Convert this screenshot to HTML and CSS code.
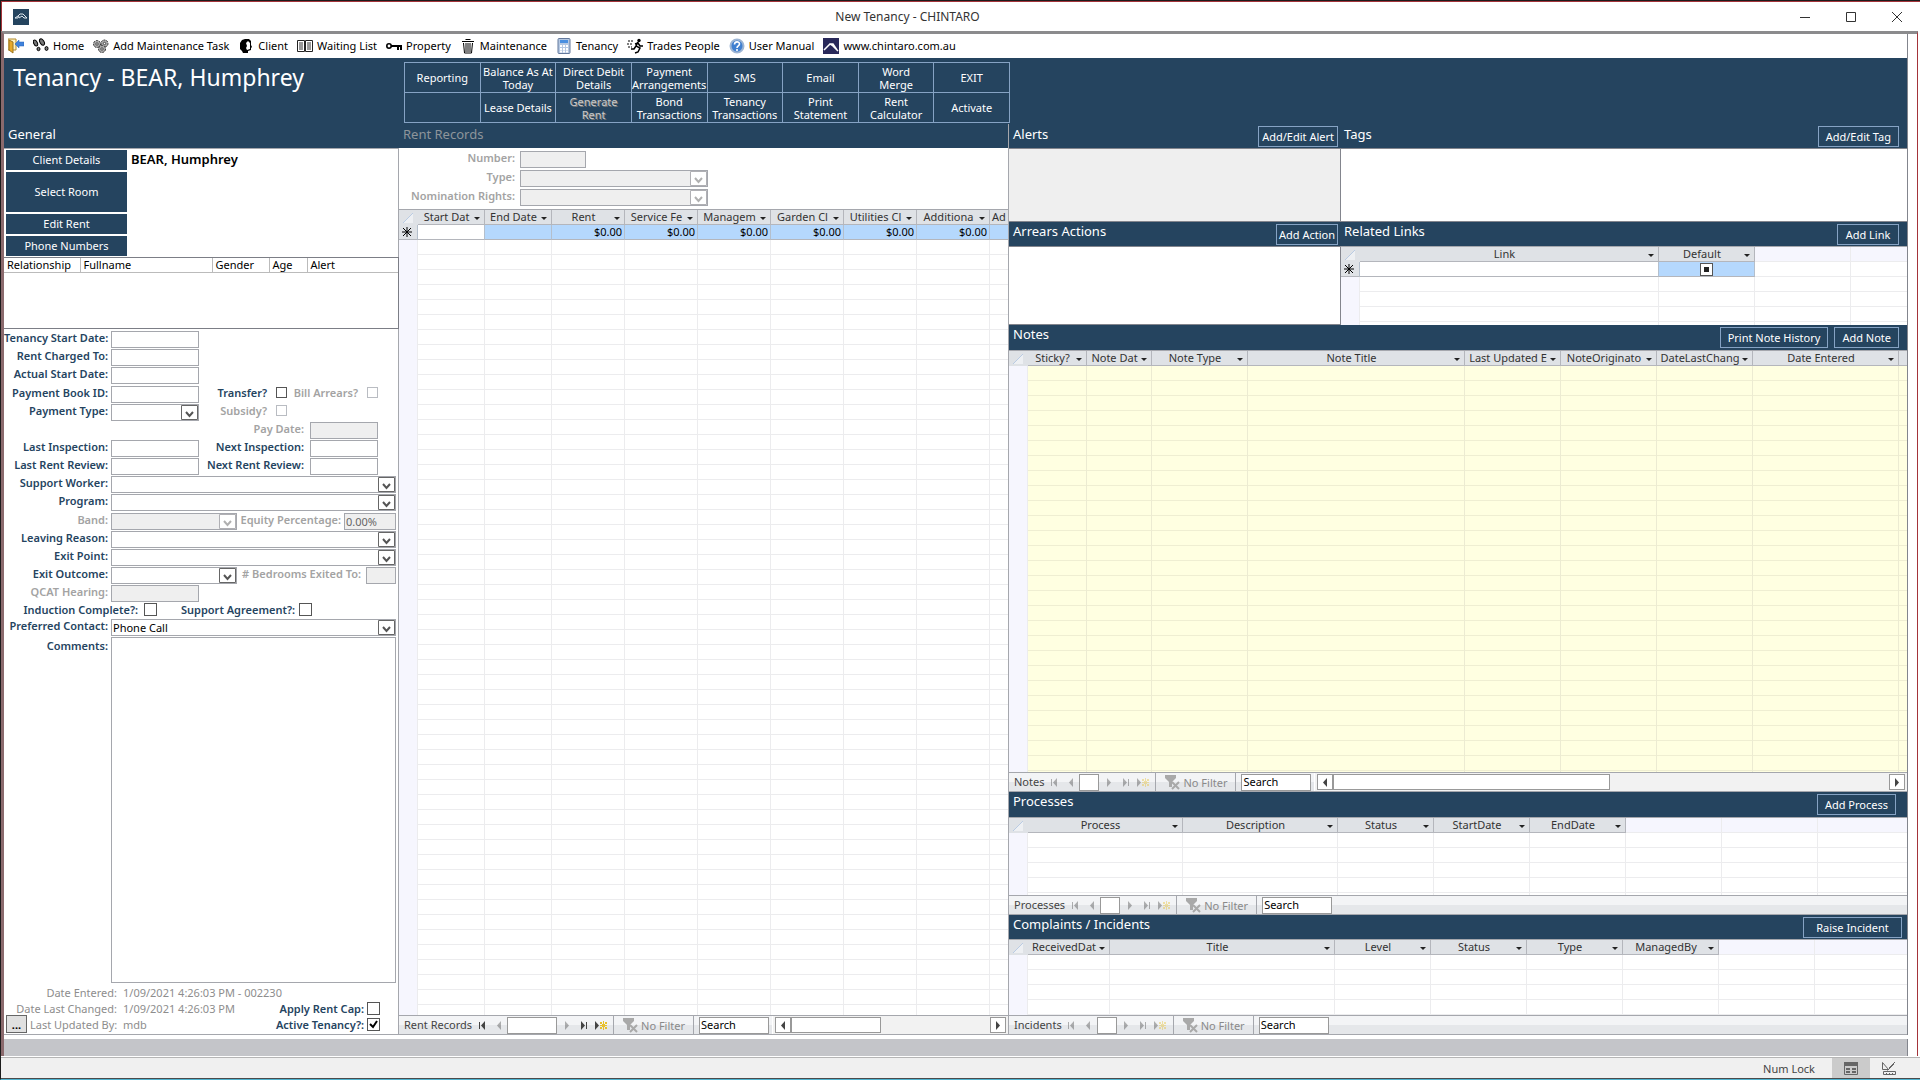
FILE: index.html
```
<!DOCTYPE html>
<html lang="en">
<head>
  <meta charset="UTF-8">
  <meta name="viewport" content="width=device-width, initial-scale=1.0">
  <title>New Tenancy - CHINTARO</title>
  <link rel="stylesheet" href="styles.css">
</head>
<body>
  <!-- shared icons -->
  <svg class="sprite" aria-hidden="true">
    <symbol id="i-first" viewBox="0 0 8 9"><path d="M1 1h1v7H1zM7 0v9L3 4.500z"/></symbol>
    <symbol id="i-prev" viewBox="0 0 8 9"><path d="M6 0v9L2 4.500z"/></symbol>
    <symbol id="i-next" viewBox="0 0 8 9"><path d="M2 0v9l4-4.500z"/></symbol>
    <symbol id="i-last" viewBox="0 0 8 9"><path d="M6 1h1v7H6zM1 0v9l4-4.500z"/></symbol>
    <symbol id="i-new" viewBox="0 0 14 9"><path d="M1 0v9l4-4.500z"/><path d="M6 1h2v2H6zM9 0h1v3H9zM11 1h2v2h-2zM6 4h7v1H6zM6 6h2v2H6zM9 6h1v3H9zM11 6h2v2h-2zM8 3h3v3H8z" fill="#e8c02c"/></symbol>
    <symbol id="i-filter" viewBox="0 0 16 16"><path d="M1 1h11v3L8 8v5H5V8L1 4z" fill="#a9a9a9"/><path d="M8 8l7 7M15 8l-7 7" stroke="#a9a9a9" stroke-width="2"/></symbol>
    <symbol id="i-corner" viewBox="0 0 12 12"><path d="M11 1v10H1z" fill="#eef0f3"/><path d="M11 1L1 11" stroke="#b9cbe3"/></symbol>
    <symbol id="i-star" viewBox="0 0 10 10"><path d="M5 0v10M0 5h10M1 1l8 8M9 1L1 9" stroke="#000"/></symbol>
  </svg>

  <div class="window">
    <header class="title-bar">
      <svg class="app-icon" viewBox="0 0 16 16"><rect width="16" height="16" fill="#25445f"/><path d="M2 9l3-2 2-2h3l2 2 2 2M2 9h3l1-2M6 9l3-2 2 2h3" fill="none" stroke="#dfe8f0"/></svg>
      <span class="caption">New Tenancy - CHINTARO</span>
      <button class="win-button" aria-label="Minimise"><svg viewBox="0 0 10 10"><path d="M0 5.500h10"/></svg></button>
      <button class="win-button" aria-label="Maximise"><svg viewBox="0 0 10 10"><path d="M.5.5h9v9h-9z"/></svg></button>
      <button class="win-button" aria-label="Close"><svg viewBox="0 0 10 10"><path d="M0 0l10 10M10 0L0 10"/></svg></button>
    </header>

    <div class="workspace">
      <nav class="menu">
        <button class="menu-item" aria-label="Exit"><svg viewBox="0 0 16 16"><path d="M0 1h8v11H0z" fill="#fff3c4" stroke="#b08a2c"/><path d="M1 2l4 2v11l-4-3z" fill="#e8a928" stroke="#9a7420"/><path d="M7 6l4-4v2h5v4h-5v2z" fill="#3f82dc" stroke="#2460b4" stroke-width=".5"/></svg></button>
        <button class="menu-item"><svg viewBox="0 0 16 16"><g fill="#777" stroke="#000"><ellipse cx="2.500" cy="5" rx="1.800" ry="3.200" transform="rotate(-25 2.500 5)"/><ellipse cx="5.500" cy="11" rx="1.500" ry="1.700"/><ellipse cx="9" cy="4" rx="2" ry="3.500" transform="rotate(-30 9 4)"/><ellipse cx="13.500" cy="10.500" rx="1.500" ry="2"/></g></svg>Home</button>
        <button class="menu-item"><svg viewBox="0 0 16 16"><g fill="#aaa" stroke="#333" stroke-dasharray="2 1"><circle cx="4" cy="6" r="3.500"/><circle cx="11.500" cy="5.500" r="3.500"/><circle cx="9" cy="11" r="3.500"/></g><g fill="#fff" stroke="#444"><circle cx="4" cy="6" r="1.200"/><circle cx="11.500" cy="5.500" r="1.200"/><circle cx="9" cy="11" r="1.200"/></g></svg>Add Maintenance Task</button>
        <button class="menu-item"><svg viewBox="0 0 16 16"><path d="M2 5l2-3 3-1h4l2 2v4l1 2-1 1v2l-3 1v2H5l-1-2-2-2z"/><path d="M8 5l2-2 2 2v6l-3 1-1-2 1-2z" fill="#fff"/></svg>Client</button>
        <button class="menu-item"><svg viewBox="0 0 16 16"><path d="M.5 2.500h7v11h-7zM8.500 2.500h7v11h-7z" fill="#fff" stroke="#222"/><path d="M2 5h4M2 7h4M2 9h4M2 11h4M10 5h4M10 7h4M10 9h4M10 11h4" stroke="#333"/></svg>Waiting List</button>
        <button class="menu-item"><svg viewBox="0 0 16 16"><circle cx="3" cy="8" r="2.200" fill="none" stroke="#000" stroke-width="1.600"/><path d="M5 7h11v5h-2V9h-1v3h-2V9H5z"/></svg>Property</button>
        <button class="menu-item"><svg viewBox="0 0 16 16"><path d="M5.500 1.500h5M2 3.500h12M3.500 5l1 10h7l1-10M6 5v9M8 5v9M10 5v9" fill="none" stroke="#000"/></svg>Maintenance</button>
        <button class="menu-item"><svg viewBox="0 0 16 16"><rect x="2" y=".5" width="12" height="15" rx="1" fill="#b5c8e2" stroke="#63799c"/><path d="M4 2h8v3H4z" fill="#4a8fe0"/><path d="M4 8h8M4 11h8M4 13.500h8" stroke="#fff" stroke-width="2" stroke-dasharray="2 1"/></svg>Tenancy</button>
        <button class="menu-item"><svg viewBox="0 0 16 16"><circle cx="12" cy="2.500" r="1.700"/><path d="M11 4l-2 4 4 2-2 4-3 1M8 6l3-1 2 3h3M9 8l-2 3H4" fill="none" stroke="#000" stroke-width="1.500"/><path d="M1 3h6M0 6h5M1 9h4" stroke="#000" stroke-dasharray="2 1"/></svg>Trades People</button>
        <button class="menu-item"><svg viewBox="0 0 16 16"><circle cx="8" cy="8" r="6.500" fill="#3f7fd0" stroke="#9db5d4" stroke-width="2"/><path d="M5.500 6.500c0-3.500 5-3.300 5-.4 0 1.800-2.500 1.900-2.500 3.900M8 11v2" fill="none" stroke="#fff" stroke-width="1.600"/></svg>User Manual</button>
        <button class="menu-item"><svg viewBox="0 0 16 16"><path d="M0 0h16v16H0z" fill="#29295a"/><path d="M1 12l6-6 3 2 5 5M7 6l3 0 4 6" fill="none" stroke="#fff" stroke-width="1.500"/></svg>www.chintaro.com.au</button>
      </nav>

      <div class="form-header">
        <h1>Tenancy - BEAR, Humphrey</h1>
        <div class="actions">
          <button>Reporting</button>
          <button>Balance As At Today</button>
          <button>Direct Debit Details</button>
          <button>Payment Arrangements</button>
          <button>SMS</button>
          <button>Email</button>
          <button>Word<br>Merge</button>
          <button>EXIT</button>
          <button aria-label="Blank"></button>
          <button>Lease Details</button>
          <button disabled>Generate<br>Rent</button>
          <button>Bond Transactions</button>
          <button>Tenancy Transactions</button>
          <button>Print Statement</button>
          <button>Rent Calculator</button>
          <button>Activate</button>
        </div>
      </div>

      <main class="columns">
        <!-- General -->
        <section class="general">
          <div class="band"><h2>General</h2></div>
          <div class="client">
            <div class="client-buttons">
              <button>Client Details</button>
              <button class="tall">Select Room</button>
              <button>Edit Rent</button>
              <button>Phone Numbers</button>
            </div>
            <strong>BEAR, Humphrey</strong>
          </div>
          <div class="household">
            <table>
              <colgroup><col class="w76"><col class="w132"><col class="w57"><col class="w38"><col></colgroup>
              <thead><tr><th>Relationship</th><th>Fullname</th><th>Gender</th><th>Age</th><th>Alert</th></tr></thead>
            </table>
          </div>

          <form class="details">
            <div class="row"><label for="start">Tenancy Start Date:</label><input id="start" class="w88" type="text"></div>
            <div class="row"><label for="charged">Rent Charged To:</label><input id="charged" class="w88" type="text"></div>
            <div class="row"><label for="actual">Actual Start Date:</label><input id="actual" class="w88" type="text"></div>
            <div class="row spaced">
              <label for="book">Payment Book ID:</label><input id="book" class="w88" type="text">
              <label for="transfer" class="check-label">Transfer?</label><input id="transfer" type="checkbox">
              <label for="bill" class="check-label wide off">Bill Arrears?</label><input id="bill" type="checkbox" disabled>
            </div>
            <div class="row">
              <label for="ptype">Payment Type:</label><select id="ptype" class="w88"><option></option></select>
              <label for="subsidy" class="check-label off">Subsidy?</label><input id="subsidy" type="checkbox" disabled>
            </div>
            <div class="row"><label for="paydate" class="date-label lone off">Pay Date:</label><input id="paydate" class="w68" type="text" disabled></div>
            <div class="row">
              <label for="lasti">Last Inspection:</label><input id="lasti" class="w88" type="text">
              <label for="nexti" class="date-label">Next Inspection:</label><input id="nexti" class="w68" type="text">
            </div>
            <div class="row">
              <label for="lastr">Last Rent Review:</label><input id="lastr" class="w88" type="text">
              <label for="nextr" class="date-label">Next Rent Review:</label><input id="nextr" class="w68" type="text">
            </div>
            <div class="row"><label for="worker">Support Worker:</label><select id="worker" class="grow"><option></option></select></div>
            <div class="row"><label for="program">Program:</label><select id="program" class="grow"><option></option></select></div>
            <div class="row spaced">
              <label for="band" class="off">Band:</label><select id="band" class="w126" disabled><option></option></select>
              <label for="equity" class="long-label off">Equity Percentage:</label><input id="equity" class="grow" type="text" value="0.00%" disabled>
            </div>
            <div class="row"><label for="reason">Leaving Reason:</label><select id="reason" class="grow"><option></option></select></div>
            <div class="row"><label for="point">Exit Point:</label><select id="point" class="grow"><option></option></select></div>
            <div class="row">
              <label for="outcome">Exit Outcome:</label><select id="outcome" class="w126"><option></option></select>
              <label for="beds" class="long-label longer off"># Bedrooms Exited To:</label><input id="beds" class="grow" type="text" disabled>
            </div>
            <div class="row"><label for="qcat" class="off">QCAT Hearing:</label><input id="qcat" class="w88" type="text" disabled></div>
            <div class="row checks">
              <label for="induction">Induction Complete?:</label><input id="induction" type="checkbox">
              <label for="agreement">Support Agreement?:</label><input id="agreement" type="checkbox">
            </div>
            <div class="row"><label for="contact">Preferred Contact:</label><select id="contact" class="grow"><option>Phone Call</option></select></div>
            <div class="row comments"><label for="comments">Comments:</label><textarea id="comments" class="grow"></textarea></div>
          </form>

          <footer class="audit">
            <div class="audit-row"><span>Date Entered:</span><span>1/09/2021 4:26:03 PM - 002230</span></div>
            <div class="audit-row"><span>Date Last Changed:</span><span>1/09/2021 4:26:03 PM</span><label for="cap">Apply Rent Cap:</label><input id="cap" type="checkbox"></div>
            <div class="audit-row last"><button class="more">...</button><span>Last Updated By:</span><span>mdb</span><label for="active">Active Tenancy?:</label><input id="active" type="checkbox" checked></div>
          </footer>
        </section>

        <!-- Rent records -->
        <section class="rent">
          <div class="band"><h2 class="off">Rent Records</h2></div>
          <form class="rent-filter">
            <div class="row"><label for="number" class="off">Number:</label><input id="number" class="w66" type="text" disabled></div>
            <div class="row"><label for="type" class="off">Type:</label><select id="type" class="w188" disabled><option></option></select></div>
            <div class="row"><label for="rights" class="off">Nomination Rights:</label><select id="rights" class="w188" disabled><option></option></select></div>
          </form>
          <div class="sheet">
            <table>
              <colgroup><col class="w19"><col class="w67"><col class="w67"><col class="w73"><col class="w73"><col class="w73"><col class="w73"><col class="w73"><col class="w73"><col></colgroup>
              <thead><tr>
                <th><svg class="corner"><use href="#i-corner"/></svg></th>
                <th><div><span>Start Dat</span></div></th><th><div><span>End Date</span></div></th><th><div><span>Rent</span></div></th><th><div><span>Service Fe</span></div></th><th><div><span>Managem</span></div></th><th><div><span>Garden Cl</span></div></th><th><div><span>Utilities Cl</span></div></th><th><div><span>Additiona</span></div></th><th class="cut">Ad</th>
              </tr></thead>
              <tbody>
                <tr class="new-row"><td><svg class="star"><use href="#i-star"/></svg></td><td></td><td></td><td>$0.00</td><td>$0.00</td><td>$0.00</td><td>$0.00</td><td>$0.00</td><td>$0.00</td><td></td></tr>
                <tr class="filler"><td></td><td></td><td></td><td></td><td></td><td></td><td></td><td></td><td></td><td></td></tr>
              </tbody>
            </table>
          </div>
          <div class="record-nav live">
            <span class="name">Rent Records</span>
            <button aria-label="First"><svg><use href="#i-first"/></svg></button>
            <button class="dim" aria-label="Previous"><svg><use href="#i-prev"/></svg></button>
            <input class="page w50" type="text" aria-label="Record">
            <button class="dim" aria-label="Next"><svg><use href="#i-next"/></svg></button>
            <button aria-label="Last"><svg><use href="#i-last"/></svg></button>
            <button class="add" aria-label="New record"><svg><use href="#i-new"/></svg></button>
            <span class="filter"><svg><use href="#i-filter"/></svg>No Filter</span>
            <input class="search" type="text" value="Search" aria-label="Search">
            <div class="scroll"><button aria-label="Scroll left"><svg><use href="#i-prev"/></svg></button><span class="thumb short"></span><button aria-label="Scroll right"><svg><use href="#i-next"/></svg></button></div>
          </div>
        </section>

        <!-- Right side -->
        <div class="side">
          <div class="pair">
            <section>
              <div class="band tight"><h2>Alerts</h2><button class="snug">Add/Edit Alert</button></div>
              <div class="box grey"></div>
            </section>
            <section>
              <div class="band"><h2>Tags</h2><button class="wide">Add/Edit Tag</button></div>
              <div class="box"></div>
            </section>
          </div>
          <div class="pair lower">
            <section>
              <div class="band tight"><h2>Arrears Actions</h2><button class="narrow">Add Action</button></div>
              <div class="box"></div>
            </section>
            <section>
              <div class="band"><h2>Related Links</h2><button>Add Link</button></div>
              <div class="sheet">
                <table>
                  <colgroup><col class="w19"><col class="w299"><col class="w96"><col class="w96"><col></colgroup>
                  <thead><tr><th><svg class="corner"><use href="#i-corner"/></svg></th><th><div><span>Link</span></div></th><th><div><span>Default</span></div></th><td></td><td></td></tr></thead>
                  <tbody>
                    <tr class="new-row"><td><svg class="star"><use href="#i-star"/></svg></td><td></td><td class="tick"><input class="mixed" type="checkbox" aria-label="Default"></td><td class="none"></td><td class="none"></td></tr>
                    <tr class="filler"><td></td><td></td><td></td><td></td><td></td></tr>
                  </tbody>
                </table>
              </div>
            </section>
          </div>

          <section class="notes">
            <div class="band"><h2>Notes</h2><button>Print Note History</button><button class="add-note">Add Note</button></div>
            <div class="sheet yellow">
              <table>
                <colgroup><col class="w19"><col class="w59"><col class="w65"><col class="w96"><col class="w217"><col class="w96"><col class="w96"><col class="w96"><col class="w146"><col></colgroup>
                <thead><tr><th><svg class="corner"><use href="#i-corner"/></svg></th><th><div><span>Sticky?</span></div></th><th><div><span>Note Dat</span></div></th><th><div><span>Note Type</span></div></th><th><div><span>Note Title</span></div></th><th><div><span>Last Updated E</span></div></th><th><div><span>NoteOriginato</span></div></th><th><div><span>DateLastChang</span></div></th><th><div><span>Date Entered</span></div></th><th></th></tr></thead>
                <tbody><tr class="filler"><td></td><td></td><td></td><td></td><td></td><td></td><td></td><td></td><td></td><td></td></tr></tbody>
              </table>
            </div>
            <div class="record-nav">
              <span class="name">Notes</span>
              <button aria-label="First"><svg><use href="#i-first"/></svg></button>
              <button aria-label="Previous"><svg><use href="#i-prev"/></svg></button>
              <input class="page" type="text" aria-label="Record">
              <button aria-label="Next"><svg><use href="#i-next"/></svg></button>
              <button aria-label="Last"><svg><use href="#i-last"/></svg></button>
              <button class="add" aria-label="New record"><svg><use href="#i-new"/></svg></button>
              <span class="filter"><svg><use href="#i-filter"/></svg>No Filter</span>
              <input class="search" type="text" value="Search" aria-label="Search">
              <div class="scroll"><button aria-label="Scroll left"><svg><use href="#i-prev"/></svg></button><span class="thumb"></span><button aria-label="Scroll right"><svg><use href="#i-next"/></svg></button></div>
            </div>
          </section>

          <section class="processes">
            <div class="band"><h2>Processes</h2><button class="medium">Add Process</button></div>
            <div class="sheet">
              <table>
                <colgroup><col class="w19"><col class="w155"><col class="w155"><col class="w96"><col class="w96"><col class="w96"><col class="w96"><col class="w96"><col></colgroup>
                <thead><tr><th><svg class="corner"><use href="#i-corner"/></svg></th><th><div><span>Process</span></div></th><th><div><span>Description</span></div></th><th><div><span>Status</span></div></th><th><div><span>StartDate</span></div></th><th><div><span>EndDate</span></div></th><td></td><td></td><td></td></tr></thead>
                <tbody><tr class="filler"><td></td><td></td><td></td><td></td><td></td><td></td><td></td><td></td><td></td></tr></tbody>
              </table>
            </div>
            <div class="record-nav">
              <span class="name">Processes</span>
              <button aria-label="First"><svg><use href="#i-first"/></svg></button>
              <button aria-label="Previous"><svg><use href="#i-prev"/></svg></button>
              <input class="page" type="text" aria-label="Record">
              <button aria-label="Next"><svg><use href="#i-next"/></svg></button>
              <button aria-label="Last"><svg><use href="#i-last"/></svg></button>
              <button class="add" aria-label="New record"><svg><use href="#i-new"/></svg></button>
              <span class="filter"><svg><use href="#i-filter"/></svg>No Filter</span>
              <input class="search" type="text" value="Search" aria-label="Search">
            </div>
          </section>

          <section class="incidents">
            <div class="band"><h2>Complaints / Incidents</h2><button class="roomy">Raise Incident</button></div>
            <div class="sheet">
              <table>
                <colgroup><col class="w19"><col class="w82"><col class="w225"><col class="w96"><col class="w96"><col class="w96"><col class="w96"><col class="w96"><col></colgroup>
                <thead><tr><th><svg class="corner"><use href="#i-corner"/></svg></th><th><div><span>ReceivedDat</span></div></th><th><div><span>Title</span></div></th><th><div><span>Level</span></div></th><th><div><span>Status</span></div></th><th><div><span>Type</span></div></th><th><div><span>ManagedBy</span></div></th><td></td><td></td></tr></thead>
                <tbody><tr class="filler"><td></td><td></td><td></td><td></td><td></td><td></td><td></td><td></td><td></td></tr></tbody>
              </table>
            </div>
            <div class="record-nav">
              <span class="name">Incidents</span>
              <button aria-label="First"><svg><use href="#i-first"/></svg></button>
              <button aria-label="Previous"><svg><use href="#i-prev"/></svg></button>
              <input class="page" type="text" aria-label="Record">
              <button aria-label="Next"><svg><use href="#i-next"/></svg></button>
              <button aria-label="Last"><svg><use href="#i-last"/></svg></button>
              <button class="add" aria-label="New record"><svg><use href="#i-new"/></svg></button>
              <span class="filter"><svg><use href="#i-filter"/></svg>No Filter</span>
              <input class="search" type="text" value="Search" aria-label="Search">
            </div>
          </section>
        </div>
      </main>
      <div class="desk"></div>
    </div>

    <footer class="status-bar">
      <span>Num Lock</span>
      <button class="view active" aria-label="Form view"><svg viewBox="0 0 14 13"><path d="M.5.5h13v12H.5z" fill="none" stroke="#666"/><path d="M0 0h14v4H0z" fill="#666"/><path d="M2 7h4M2 10h4M8 7h4M8 10h4" stroke="#666" stroke-width="2"/></svg></button>
      <button class="view" aria-label="Design view"><svg viewBox="0 0 14 13"><path d="M.5.5v7h6zM13 0L7 6M12 2L6 8H5" fill="none" stroke="#666"/><path d="M1.500 9.500h12v3h-12zM4.500 11v2M7.500 11v2M10.500 11v2" fill="none" stroke="#666"/></svg></button>
    </footer>
  </div>
</body>
</html>
```
FILE: styles.css
```
:root {
  --navy: #25445f;
  --line: #a5a7ad;
  --grid: #ececee;
  --head: #dfe2e6;
  --off: #a3a3a3;
}

*, *::before, *::after {
  box-sizing: border-box;
}

body {
  margin: 0;
  font-family: "Noto Sans", "Open Sans", sans-serif;
  font-size: 11px;
  line-height: 15px;
  color: #000;
  background: #fff;
}

button, input, select, textarea {
  font: inherit;
  color: inherit;
  margin: 0;
  padding: 0;
  border-radius: 0;
}

button {
  border: none;
  background: none;
  white-space: nowrap;
}

h1, h2 {
  margin: 0;
  font-weight: 400;
}

.sprite {
  display: none;
}

.window {
  display: flex;
  flex-direction: column;
  height: 100vh;
  border-top: 1px solid #1c1c1c;
  border-left: 1px solid #1c1c1c;
  border-bottom: 1px solid #4fb3cf;
}

/* title bar */
.title-bar {
  display: flex;
  align-items: center;
  height: 30px;
  flex: none;
  padding-left: 11px;
  border-top: 1px solid #a4343a;
  border-left: 1px solid #a4343a;
  color: #333;
}

.app-icon {
  width: 16px;
  height: 16px;
}

.caption {
  flex: 1;
  padding-left: 4px;
  font-size: 12px;
  text-align: center;
}

.win-button {
  width: 46px;
  height: 28px;
}

.win-button svg {
  width: 10px;
  height: 10px;
  display: block;
  margin: auto;
  fill: none;
  stroke: #333;
}

.workspace {
  flex: 1;
  display: flex;
  flex-direction: column;
  min-height: 0;
  margin-right: 2px;
  padding-right: 9px;
  border-top: 3px solid #8b8b8d;
  border-left: 3px solid #8b6a6d;
  border-right: 1px solid #a4343a;
}

/* menu */
.menu {
  display: flex;
  align-items: center;
  gap: 6px;
  height: 24px;
  flex: none;
  padding: 0 0 1px 1px;
  border-right: 1px solid #83858d;
}

.menu-item {
  display: flex;
  align-items: center;
  gap: 4px;
  padding-left: 3px;
}

.menu-item svg {
  width: 16px;
  height: 16px;
}

/* header */
.form-header {
  display: grid;
  grid-template-columns: 400px 606px;
  height: 66px;
  flex: none;
  background: var(--navy);
  color: #fff;
  border-right: 1px solid #83858d;
}

.form-header h1 {
  font-size: 23px;
  line-height: 32px;
  padding: 3px 0 0 9px;
}

.actions {
  display: grid;
  grid-template-columns: repeat(8, 1fr);
  grid-auto-rows: 30px;
  align-self: start;
  margin-top: 4px;
  border-top: 1px solid #86a3c4;
  border-left: 1px solid #86a3c4;
}

.actions button {
  border-right: 1px solid #86a3c4;
  border-bottom: 1px solid #86a3c4;
  line-height: 13px;
  white-space: normal;
}

.actions button:disabled {
  color: #c9c9c9;
  text-shadow: 1px 1px 0 #777;
}

.columns {
  flex: 1;
  display: grid;
  grid-template-columns: 395px 609px 1fr;
  min-height: 0;
  border-right: 1px solid #83858d;
}

/* section bands */
.band {
  display: flex;
  align-items: flex-start;
  gap: 6px;
  height: 24px;
  flex: none;
  padding: 2px 8px 0 4px;
  background: var(--navy);
  color: #fff;
}

.band.tight {
  padding-right: 2px;
}

.band h2 {
  flex: 1;
  font-size: 13px;
  line-height: 16px;
  white-space: nowrap;
}

.band h2.off {
  color: #8d959b;
}

.lower .band h2, .notes .band h2, .processes .band h2, .incidents .band h2 {
  line-height: 14px;
}

.band button {
  height: 21px;
  min-width: 62px;
  padding: 0 7px;
  border: 1px solid #86a3c4;
  flex: none;
}

.band button.narrow {
  padding: 0 1px;
}

.band button.snug {
  padding: 0 3px;
}

.band button.wide {
  min-width: 81px;
}

.band button.medium {
  min-width: 79px;
}

.band button.roomy {
  min-width: 99px;
}

.notes .band, .processes .band {
  height: 25px;
}

.processes .band {
  padding-right: 11px;
}

.incidents .band {
  padding-right: 5px;
}

/* general panel */
.general, .rent, .side, .notes, .processes, .incidents, .pair section {
  display: flex;
  flex-direction: column;
  min-width: 0;
  min-height: 0;
}

.general .client {
  display: flex;
  gap: 4px;
  height: 109px;
  flex: none;
  padding: 1px 2px;
  border-top: 1px solid var(--line);
  border-right: 1px solid var(--line);
}

.client-buttons {
  display: flex;
  flex-direction: column;
  gap: 2px;
  width: 121px;
}

.client-buttons button {
  height: 20px;
  padding-bottom: 1px;
  background: var(--navy);
  color: #fff;
}

.client-buttons .tall {
  height: 41px;
}

.client strong {
  font-size: 13px;
  font-weight: 600;
  line-height: 18px;
}

.household {
  height: 72px;
  flex: none;
  border: 1px solid #7c7e86;
  border-left: none;
}

.household table {
  width: 100%;
  border-collapse: collapse;
  table-layout: fixed;
}

.household th {
  height: 14px;
  padding: 0 0 0 3px;
  text-align: left;
  font-weight: 400;
  line-height: 14px;
  border-bottom: 1px solid #bbb;
  border-right: 1px solid #bbb;
}

.household th:last-child {
  border-right: none;
}

.details {
  flex: 1;
  display: flex;
  flex-direction: column;
  min-height: 0;
  padding: 2px 2px 0 0;
  border-right: 1px solid var(--line);
}

.row {
  display: flex;
  align-items: flex-start;
  gap: 3px;
  height: 18px;
  flex: none;
}

.row.spaced {
  margin-top: 1px;
}

.row label {
  width: 104px;
  flex: none;
  text-align: right;
  font-weight: 600;
  line-height: 14px;
  color: var(--navy);
  white-space: nowrap;
}

.row label.off {
  color: var(--off);
}

.row input[type="text"], .row select, .row textarea {
  height: 17px;
  min-width: 0;
  padding: 0 0 1px 1px;
  border: 1px solid var(--line);
  background: #fff;
}

.row select {
  appearance: none;
  background: #fff url("data:image/svg+xml,%3Csvg xmlns='http://www.w3.org/2000/svg' width='17' height='15'%3E%3Cpath d='M.5.5h16v14H.5z' fill='%23fff' stroke='%23666'/%3E%3Cpath d='M5 7l3.500 4L12 7' fill='none' stroke='%23555' stroke-width='2'/%3E%3C/svg%3E") no-repeat right top;
}

.row select:disabled {
  opacity: 1;
  background: #efefef url("data:image/svg+xml,%3Csvg xmlns='http://www.w3.org/2000/svg' width='17' height='15'%3E%3Cpath d='M.5.5h16v14H.5z' fill='%23fff' stroke='%23b0b0b4'/%3E%3Cpath d='M5 7l3.500 4L12 7' fill='none' stroke='%23b0b0b0' stroke-width='2'/%3E%3C/svg%3E") no-repeat right top;
}

.row input[type="text"]:disabled {
  background: #efefef;
  color: #666;
}

.row .grow {
  flex: 1;
}

.row .check-label {
  width: 65px;
}

.row .check-label.wide {
  margin-left: 3px;
}

.row .check-label + input {
  margin: 1px 0 0 6px;
}

.row .date-label {
  width: 102px;
}

.row .date-label.lone {
  width: 300px;
}

.row .date-label + input {
  margin-left: 3px;
}

.row .long-label {
  width: 101px;
}

.row .long-label.longer {
  width: 121px;
  margin-right: 2px;
}

input[type="checkbox"] {
  appearance: none;
  width: 11px;
  height: 11px;
  flex: none;
  border: 1px solid #555;
  background: #fff;
}

input[type="checkbox"]:disabled {
  border-color: #b9bcc2;
}

.row.checks {
  height: 16px;
}

.row.checks label {
  width: 134px;
}

.row.checks label:nth-of-type(2) {
  width: 135px;
}

.row.checks input, .audit input[type="checkbox"] {
  width: 13px;
  height: 13px;
  margin-left: 3px;
}

.row.checks input:last-child {
  margin-left: 1px;
}

.row.comments {
  flex: 1;
}

.row.comments label {
  padding-top: 2px;
}

.row.comments textarea {
  align-self: stretch;
  height: auto;
  resize: none;
}

.audit {
  height: 52px;
  flex: none;
  padding: 1px 18px 0 0;
  border-right: 1px solid var(--line);
  border-bottom: 1px solid var(--line);
  color: #8d8d8d;
}

.audit-row {
  display: flex;
  align-items: center;
  gap: 6px;
  height: 16px;
  white-space: nowrap;
}

.audit-row > span:first-child {
  width: 113px;
  text-align: right;
}

.audit-row.last {
  gap: 3px;
}

.audit-row .more {
  width: 21px;
  height: 18px;
  margin-left: 2px;
  border: 1px solid #666;
  background: #e0e0e0;
  color: #000;
  font-weight: 700;
}

.audit-row .more + span {
  width: 87px;
  margin-right: 3px;
  text-align: right;
}

.audit-row label {
  margin-left: auto;
  font-weight: 600;
  color: var(--navy);
}

.audit .audit-row input {
  margin-left: -3px;
}

.audit .audit-row.last input {
  margin-left: 0;
}

.audit input[type="checkbox"]:checked {
  background: url("data:image/svg+xml,%3Csvg xmlns='http://www.w3.org/2000/svg' width='11' height='11'%3E%3Cpath d='M2 5l3 3 4-6' fill='none' stroke='%23000' stroke-width='2'/%3E%3C/svg%3E") center no-repeat;
}

/* rent records */
.rent-filter {
  padding-top: 3px;
  height: 61px;
  flex: none;
}

.rent-filter .row {
  height: 19px;
}

.rent-filter .row label {
  width: 116px;
}

.rent-filter .row input, .rent-filter .row select {
  margin-left: 2px;
}

/* datasheets */
.sheet {
  flex: 1;
  min-height: 0;
  overflow: hidden;
  border-top: 1px solid var(--line);
}

.sheet table {
  width: 100%;
  height: 100%;
  table-layout: fixed;
  border-collapse: separate;
  border-spacing: 0;
}

.sheet thead th, .sheet thead td {
  height: 15px;
  padding: 0;
  font-weight: 400;
  line-height: 14px;
  color: #333;
  white-space: nowrap;
  overflow: hidden;
}

.sheet thead th {
  background: var(--head);
  border-right: 1px solid #b4b6bc;
  border-bottom: 1px solid #b4b6bc;
}

.sheet thead th:first-child {
  border-color: var(--head);
}

.sheet thead td {
  background: #f6f6fe;
  border-right: 1px solid var(--grid);
  border-bottom: 1px solid var(--grid);
}

.sheet th.cut {
  text-align: left;
  padding-left: 2px;
}

.sheet th div {
  display: flex;
  padding: 0 4px 0 3px;
}

.sheet th span {
  flex: 1;
  overflow: hidden;
}

/* drop-down arrow of a column */
.sheet th div::after {
  content: "";
  flex: none;
  width: 6px;
  height: 3px;
  margin: 7px 0 0 2px;
  border: 3px solid transparent;
  border-top-color: #222;
  border-bottom: none;
}

.corner {
  display: block;
  width: 12px;
  height: 12px;
  margin: 1px 0 0 3px;
}

.star {
  display: block;
  width: 10px;
  height: 10px;
  margin: auto;
}

.new-row td {
  height: 15px;
  padding: 0 2px 0 0;
  line-height: 14px;
  text-align: right;
  background: #b5d8fd;
  border-right: 1px solid #b4bfcc;
  border-bottom: 1px solid #b4b6bc;
}

.new-row td:first-child {
  background: var(--head);
}

.new-row td:nth-child(2) {
  background: #fff;
}

.new-row td.none {
  background: #fff;
  border-color: var(--grid);
}

.new-row td.tick {
  padding: 0;
  text-align: center;
  line-height: 0;
}

.new-row input.mixed {
  width: 13px;
  height: 13px;
  background: #fff linear-gradient(#222, #222) center / 5px 5px no-repeat;
}

.filler td {
  padding: 0;
  border-right: 1px solid var(--grid);
  background: repeating-linear-gradient(#fff 0 14px, var(--grid) 14px 15px);
}

.filler td:first-child {
  background: #f6f6fe;
}

.yellow .filler td:not(:first-child) {
  border-color: #ecebd2;
  background: repeating-linear-gradient(#ffffe1 0 14px, #efeed2 14px 15px);
}

.sheet tr > :last-child {
  border-right: none;
}

/* record navigation */
.record-nav {
  display: flex;
  align-items: center;
  height: 20px;
  flex: none;
  padding-left: 5px;
  border-top: 1px solid var(--line);
  border-bottom: 1px solid var(--line);
  background: linear-gradient(#f3f4f6 50%, #e5e7ea 50%);
  color: #444;
}

.record-nav .name {
  margin-right: 1px;
  padding-bottom: 1px;
}

.record-nav button {
  width: 17px;
  height: 16px;
}

.record-nav button svg {
  display: block;
  width: 8px;
  height: 9px;
  margin: auto;
  fill: #444;
}

.record-nav:not(.live) > button svg, .record-nav .dim svg {
  opacity: 0.4;
}

.record-nav .add svg {
  width: 14px;
}

.record-nav input {
  height: 17px;
  padding: 0 0 1px 1px;
  border: 1px solid #999;
  background: #fff;
  color: #000;
}

.record-nav .page {
  width: 20px;
  margin-right: 1px;
}

.record-nav .page.w50 {
  width: 50px;
}

.record-nav .filter {
  display: flex;
  align-items: center;
  gap: 3px;
  height: 18px;
  margin: 0 5px 0 4px;
  padding: 0 8px;
  border-left: 1px solid var(--line);
  border-right: 1px solid var(--line);
  color: #8a8a8a;
}

.record-nav .filter svg {
  width: 16px;
  height: 16px;
}

.record-nav .search {
  width: 70px;
}

.scroll {
  flex: 1;
  display: flex;
  height: 18px;
  margin-left: 3px;
  padding: 1px 2px;
  border-left: 1px solid #fff;
  background: #f2f2f2;
}

.scroll button {
  width: 16px;
  border: 1px solid #999;
  background: #fff;
}

.scroll .thumb {
  width: 277px;
  margin-right: auto;
  border: 1px solid #999;
  background: #fff;
}

.scroll .thumb.short {
  width: 90px;
}

/* right side */
.side {
  border-left: 1px solid var(--line);
}

.pair {
  display: grid;
  grid-template-columns: 331px 1fr;
  height: 98px;
  flex: none;
}

.pair section + section .box, .pair section + section .sheet {
  border-left: 1px solid #83858d;
}

.pair.lower {
  height: 103px;
}

.box {
  flex: 1;
  border-top: 1px solid #83858d;
  border-bottom: 1px solid #83858d;
}

.box.grey {
  background: #efefef;
}

.notes {
  flex: 1;
}

.processes {
  height: 123px;
  flex: none;
}

.incidents {
  height: 120px;
  flex: none;
}

/* widths */
.w19 { width: 19px; }
.w38 { width: 38px; }
.w57 { width: 57px; }
.w59 { width: 59px; }
.w65 { width: 65px; }
.w66 { width: 66px; }
.w67 { width: 67px; }
.w68 { width: 68px; }
.w73 { width: 73px; }
.w76 { width: 76px; }
.w82 { width: 82px; }
.w88 { width: 88px; }
.w96 { width: 96px; }
.w126 { width: 126px; }
.w132 { width: 132px; }
.w146 { width: 146px; }
.w155 { width: 155px; }
.w188 { width: 188px; }
.w217 { width: 217px; }
.w225 { width: 225px; }
.w299 { width: 299px; }

/* bottom */
.desk {
  height: 17px;
  flex: none;
  margin-top: 4px;
  background: #c4c5c9;
  border-right: 1px solid #83858d;
}

.status-bar {
  display: flex;
  align-items: center;
  justify-content: flex-end;
  height: 22px;
  flex: none;
  margin-top: 1px;
  padding-right: 12px;
  border-top: 1px solid #b5b5b5;
  border-bottom: 1px solid #4b4b4b;
  background: #f0f0f0;
  color: #444;
}

.status-bar span {
  margin-right: 17px;
}

.view {
  width: 38px;
  height: 20px;
}

.view.active {
  background: #cbcbcb;
}

.view svg {
  display: block;
  width: 14px;
  height: 13px;
  margin: auto;
}
```
